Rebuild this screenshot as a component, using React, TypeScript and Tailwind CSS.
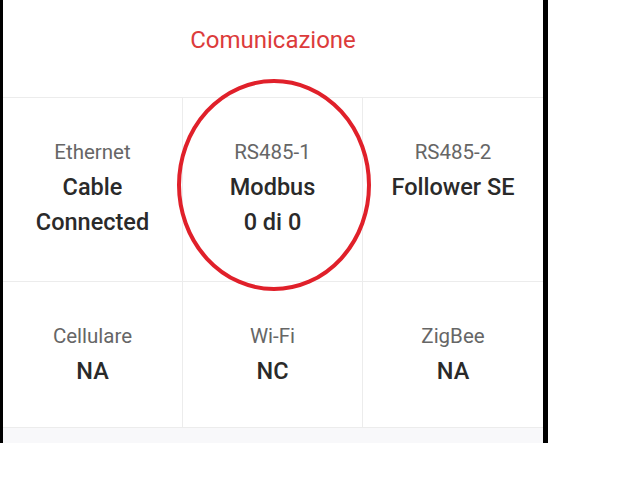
const cells = [
  { label: "Ethernet", lines: ["Cable", "Connected"] },
  { label: "RS485-1", lines: ["Modbus", "0 di 0"] },
  { label: "RS485-2", lines: ["Follower SE"] },
  { label: "Cellulare", lines: ["NA"] },
  { label: "Wi-Fi", lines: ["NC"] },
  { label: "ZigBee", lines: ["NA"] },
];

export default function App() {
  return (
    <div className="w-[626px] h-[501px] bg-white" style={{ fontFamily: "Roboto, 'Liberation Sans', sans-serif" }}>
      <div className="relative w-[548px] border-l-[3px] border-r-[5px] border-black">
        <div className="h-[97px] flex items-center justify-center pb-[18px]">
          <h2 className="text-[24px] text-[#dc3b3b]">Comunicazione</h2>
        </div>
        <div className="grid grid-cols-3 grid-rows-[184px_146px] border-t border-[#ececec]">
          {cells.map((c, i) => (
            <div
              key={c.label}
              className={
                "flex flex-col items-center pt-[37px] border-b border-[#ececec] " +
                (i % 3 !== 2 ? "border-r" : "")
              }
            >
              <div className="text-[20.5px] leading-[35px] text-[#666]">{c.label}</div>
              {c.lines.map((l) => (
                <div key={l} className="text-[23.5px] leading-[35px] font-medium text-[#2a2a2a]">
                  {l}
                </div>
              ))}
            </div>
          ))}
        </div>
        <div className="h-[15px] bg-[#f8f8fa]" />
        <svg className="absolute left-[172px] top-[76px]" width="198" height="218" viewBox="0 0 198 218">
          <ellipse cx="99" cy="109" rx="95" ry="104" fill="none" stroke="#e0202a" strokeWidth="4" />
        </svg>
      </div>
    </div>
  );
}
